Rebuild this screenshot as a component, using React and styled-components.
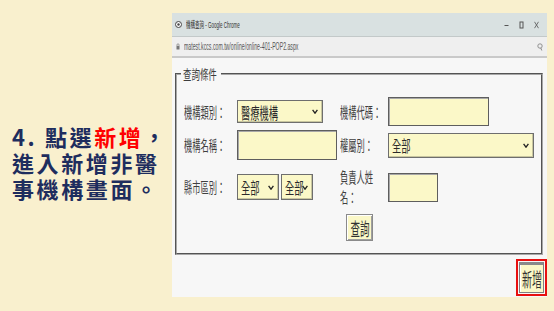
import React from 'react'
import styled, { createGlobalStyle } from 'styled-components'

const GlobalStyle = createGlobalStyle`
  html, body {
    margin: 0;
    padding: 0;
  }
  body {
    background: #f9f0ce;
    font-family: "Noto Sans CJK TC", "Noto Sans", sans-serif;
  }
`

const Page = styled.div`
  width: 554px;
  height: 311px;
  box-sizing: border-box;
  padding-top: 13px;
  display: flex;
  align-items: flex-start;
  background: #f9f0ce;
  overflow: hidden;
`

const Intro = styled.div`
  width: 160px;
  margin: 110px 0 0 12px;
  font-size: 22px;
  font-weight: 700;
  line-height: 26px;
  letter-spacing: 2.6px;
  color: #1e2d5e;
`

const IntroLine = styled.div`
  white-space: nowrap;
`

const Hot = styled.span`
  color: #ff0000;
`

// the screenshot is squashed sideways, so text is narrowed with scaleX
const Squeeze = styled.span`
  display: inline-block;
  white-space: nowrap;
  transform: scaleX(${props => props.$x || 0.55});
  transform-origin: ${props => props.$origin || 'left'} center;
`

const Window = styled.div`
  width: 375px;
  height: 284px;
  display: flex;
  flex-direction: column;
  background: #f7f7f7;
`

const TitleBar = styled.div`
  height: 23px;
  flex-shrink: 0;
  display: flex;
  align-items: center;
  padding-left: 3px;
  background: #d9e1e1;
  border-bottom: 1px solid #c3c9c9;
  font-family: "Liberation Sans", "Noto Sans CJK TC", sans-serif;
  font-size: 9px;
  color: #333;
`

const TitleText = styled.div`
  margin-left: 4px;
  width: 60px;
`

const Controls = styled.div`
  margin-left: auto;
  padding-right: 8px;
  display: flex;
  align-items: center;
  gap: 10px;
`

const AddressBar = styled.div`
  height: 19px;
  flex-shrink: 0;
  display: flex;
  align-items: center;
  padding: 0 4px 0 4px;
  background: #efefef;
  border-bottom: 2px solid #c9c9c9;
  font-family: "Liberation Sans", sans-serif;
  font-size: 10px;
  color: #555;
`

const Url = styled.div`
  margin-left: 4px;
  width: 130px;
`

const SearchIcon = styled.svg`
  margin-left: auto;
`

const Content = styled.div`
  flex: 1;
  display: flex;
  flex-direction: column;
  padding-left: 3px;
`

const Fieldset = styled.fieldset`
  margin: 9px 4px 0 0;
  padding: 16px 0 12px 7px;
  border: 2px groove #a8a8a8;
  min-inline-size: 0;
`

const Legend = styled.legend`
  width: 36px;
  margin-left: -3px;
  padding: 0 2px;
  font-size: 13px;
  line-height: 14px;
  color: #3c3c3c;
`

const FormGrid = styled.div`
  display: grid;
  grid-template-columns: 53px 103px 48px 146px;
  grid-template-rows: 29px 30px 46px 27px;
  row-gap: 4px;
  align-items: center;
`

const Label = styled.div`
  font-size: 15px;
  line-height: 20px;
  color: #3f3f3f;
`

const TextField = styled.input`
  width: ${props => props.$w}px;
  height: ${props => props.$h}px;
  box-sizing: border-box;
  padding: 0;
  margin: 0;
  background: #fbf8c8;
  border: 1px solid #5e5e5e;
  box-shadow: inset 1px 1px 0 #a8a8a8;
`

const SelectBox = styled.div`
  width: ${props => props.$w}px;
  height: ${props => props.$h}px;
  box-sizing: border-box;
  display: grid;
  grid-template-columns: minmax(0, 1fr) auto;
  align-items: center;
  padding: 0 4px 0 3px;
  background: #fbf8c8;
  border: 1px solid #6e6e6e;
  box-shadow: inset -1px -1px 0 #c8c6a0;
  font-size: 16px;
  color: #2a2a2a;
`

const SelectText = styled.div`
  min-width: 0;
  line-height: 18px;
`

const Pair = styled.div`
  display: flex;
  gap: 2px;
`

const QueryButton = styled.button`
  justify-self: start;
  margin-left: 6px;
  width: 27px;
  height: 27px;
  padding: 0;
  display: flex;
  align-items: center;
  justify-content: center;
  background: #fbf8c8;
  border: 1px solid #8a8a8a;
  box-shadow: inset 1px 1px 0 #fff, inset -1px -1px 0 #a0a0a0;
  font-family: "Noto Sans CJK TC", sans-serif;
  font-size: 18px;
  color: #333;
`

const Footer = styled.div`
  display: flex;
  justify-content: flex-end;
  padding-top: 4px;
`

const RedFrame = styled.div`
  border: 2px solid #e81010;
  padding: 1px;
  display: flex;
`

const AddButton = styled.button`
  width: 25px;
  height: 31px;
  padding: 0;
  display: flex;
  align-items: center;
  justify-content: center;
  background: #fbf8c8;
  border: 1px solid #808080;
  border-top: 3px solid #8a8a8a;
  box-shadow: inset 1px 0 0 #fff;
  font-family: "Noto Sans CJK TC", sans-serif;
  font-size: 19px;
  color: #333;
`

const Chevron = () => (
  <svg width='6' height='5' viewBox='0 0 6 5'>
    <polyline points='0.6,0.8 3,4.2 5.4,0.8' fill='none' stroke='#222' strokeWidth='1.3' />
  </svg>
)

const Select = ({ w, h, children }) => (
  <SelectBox $w={w} $h={h}>
    <SelectText><Squeeze $x={0.58}>{children}</Squeeze></SelectText>
    <Chevron />
  </SelectBox>
)

const FieldLabel = ({ children }) => (
  <Label><Squeeze>{children}</Squeeze></Label>
)

const App = () => (
  <Page>
    <GlobalStyle />
    <Intro>
      <IntroLine>4. 點選<Hot>新增</Hot>，</IntroLine>
      <IntroLine>進入新增非醫</IntroLine>
      <IntroLine>事機構畫面。</IntroLine>
    </Intro>
    <Window>
      <TitleBar>
        <svg width='7' height='7' viewBox='0 0 7 7'>
          <circle cx='3.5' cy='3.5' r='3' fill='#fff' stroke='#444' strokeWidth='1' />
          <circle cx='3.5' cy='3.5' r='1.2' fill='#444' />
        </svg>
        <TitleText><Squeeze $x={0.5}>機構查詢 - Google Chrome</Squeeze></TitleText>
        <Controls>
          <svg width='5' height='8' viewBox='0 0 5 8'>
            <line x1='0.5' y1='4.5' x2='4.5' y2='4.5' stroke='#555' strokeWidth='1' />
          </svg>
          <svg width='5' height='8' viewBox='0 0 5 8'>
            <rect x='1' y='1' width='3' height='6' fill='none' stroke='#555' strokeWidth='1' />
          </svg>
          <svg width='5' height='8' viewBox='0 0 5 8'>
            <line x1='0.5' y1='0.8' x2='4.5' y2='7.2' stroke='#555' strokeWidth='0.8' />
            <line x1='4.5' y1='0.8' x2='0.5' y2='7.2' stroke='#555' strokeWidth='0.8' />
          </svg>
        </Controls>
      </TitleBar>
      <AddressBar>
        <svg width='4' height='7' viewBox='0 0 4 7'>
          <rect x='0.5' y='3' width='3' height='3.5' fill='#777' />
          <path d='M1 3 V1.8 a1 1 0 0 1 2 0 V3' fill='none' stroke='#777' strokeWidth='0.7' />
        </svg>
        <Url><Squeeze $x={0.52}>matest.kccs.com.tw/online/online-401-POP2.aspx</Squeeze></Url>
        <SearchIcon width='6' height='8' viewBox='0 0 6 8'>
          <circle cx='3' cy='3' r='2.2' fill='none' stroke='#888' strokeWidth='0.9' />
          <line x1='3.8' y1='5' x2='4.8' y2='7.5' stroke='#888' strokeWidth='1' />
        </SearchIcon>
      </AddressBar>
      <Content>
        <Fieldset>
          <Legend><Squeeze $x={0.65}>查詢條件</Squeeze></Legend>
          <FormGrid>
            <FieldLabel>機構類別：</FieldLabel>
            <Select w={86} h={23}>醫療機構</Select>
            <FieldLabel>機構代碼：</FieldLabel>
            <TextField $w={101} $h={29} />

            <FieldLabel>機構名稱：</FieldLabel>
            <TextField $w={100} $h={30} />
            <FieldLabel>權屬別：</FieldLabel>
            <Select w={146} h={25}>全部</Select>

            <FieldLabel>縣市區別：</FieldLabel>
            <Pair>
              <Select w={42} h={26}>全部</Select>
              <Select w={32} h={26}>全部</Select>
            </Pair>
            <Label>
              <Squeeze>負責人姓</Squeeze><br />
              <Squeeze>名：</Squeeze>
            </Label>
            <TextField $w={50} $h={29} />

            <span />
            <span />
            <QueryButton><Squeeze $x={0.53} $origin='center'>查詢</Squeeze></QueryButton>
          </FormGrid>
        </Fieldset>
        <Footer>
          <RedFrame>
            <AddButton><Squeeze $x={0.53} $origin='center'>新增</Squeeze></AddButton>
          </RedFrame>
        </Footer>
      </Content>
    </Window>
  </Page>
)

export default App
